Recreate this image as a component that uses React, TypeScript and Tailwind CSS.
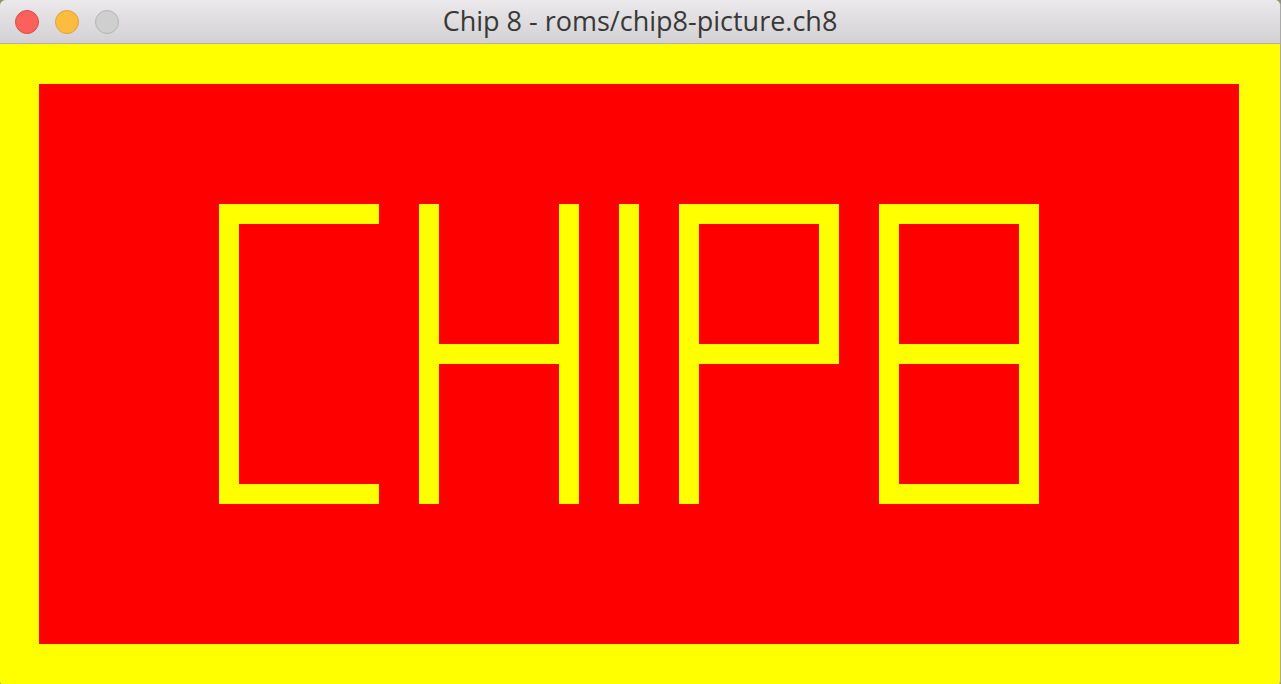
// CHIP-8 emulator window: title bar + 64x32 display scaled x20
type Rect = [number, number, number, number]; // col, row, w, h in chip-8 pixels

const letters: Rect[] = [
  // C
  [11, 8, 8, 1],
  [11, 8, 1, 15],
  [11, 22, 8, 1],
  // H
  [21, 8, 1, 15],
  [28, 8, 1, 15],
  [22, 15, 6, 1],
  // I
  [31, 8, 1, 15],
  // P
  [34, 8, 1, 15],
  [34, 8, 8, 1],
  [41, 8, 1, 8],
  [34, 15, 8, 1],
  // 8
  [44, 8, 1, 15],
  [51, 8, 1, 15],
  [44, 8, 8, 1],
  [44, 15, 8, 1],
  [44, 22, 8, 1],
];

function TrafficLights() {
  return (
    <div className="flex items-center gap-4 pl-[15px]">
      <span className="w-6 h-6 rounded-full bg-[#fc605c] border border-[#de4a46]" />
      <span className="w-6 h-6 rounded-full bg-[#fdbc40] border border-[#dea236]" />
      <span className="w-6 h-6 rounded-full bg-[#d0cfd0] border border-[#b5b4b5]" />
    </div>
  );
}

function Display() {
  return (
    <svg
      width={1280}
      height={640}
      viewBox="0 0 64 32"
      shapeRendering="crispEdges"
      className="block -ml-px"
    >
      <rect x={0} y={0} width={64} height={32} fill="#ffff00" />
      <rect x={2} y={2} width={60} height={28} fill="#ff0000" />
      {letters.map(([x, y, w, h], i) => (
        <rect key={i} x={x} y={y} width={w} height={h} fill="#ffff00" />
      ))}
    </svg>
  );
}

export default function App() {
  return (
    <div className="w-[1281px] h-[684px] bg-[#8e8e8e] overflow-hidden">
      <div className="w-[1281px] h-[684px] flex flex-col rounded-t-[6px] rounded-b-[3px] overflow-hidden bg-[#ffff00] border-r border-[#a9a9a9]">
        <div className="relative h-11 shrink-0 flex items-center bg-gradient-to-b from-[#ebe9eb] to-[#d3d1d3] border-b border-[#b3b1b3]">
          <TrafficLights />
          <div
            className="absolute inset-0 flex items-center justify-center text-[27px] leading-none text-[#383838]"
            style={{ fontFamily: '"Open Sans", Inter, sans-serif' }}
          >
            <span className="pb-[2px]">Chip 8 - roms/chip8-picture.ch8</span>
          </div>
        </div>
        <Display />
      </div>
    </div>
  );
}
